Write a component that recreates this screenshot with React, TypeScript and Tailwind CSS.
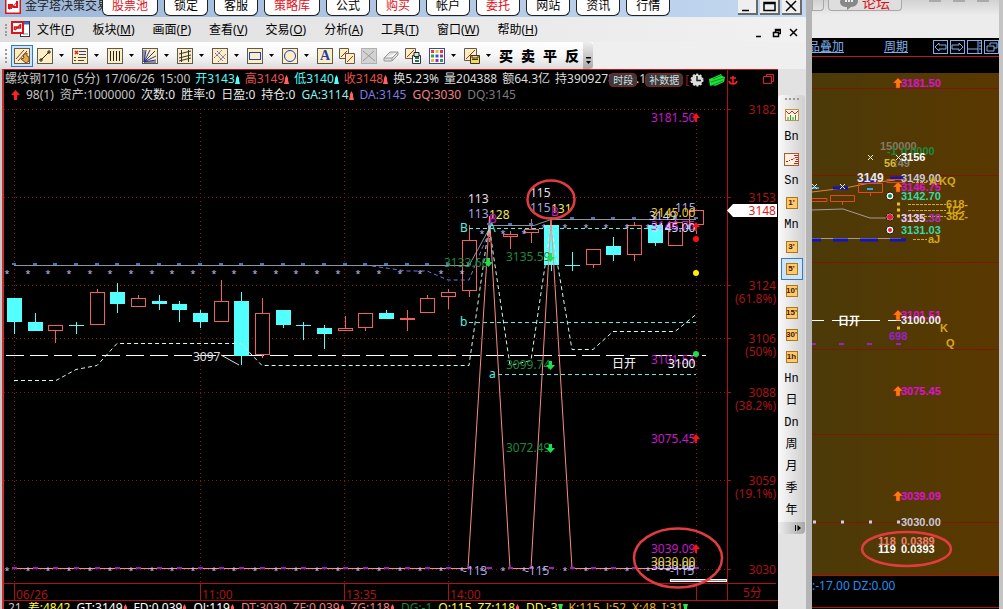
import React from 'react';

const tabs = [
  { label: '股票池', hot: true },
  { label: '锁定' },
  { label: '客服' },
  { label: '策略库', hot: true },
  { label: '公式' },
  { label: '购买', hot: true },
  { label: '帐户' },
  { label: '委托', hot: true },
  { label: '网站' },
  { label: '资讯' },
  { label: '行情' },
];

const menus = [
  ['文件', 'F'],
  ['板块', 'M'],
  ['画面', 'P'],
  ['查看', 'V'],
  ['交易', 'O'],
  ['分析', 'A'],
  ['工具', 'T'],
  ['窗口', 'W'],
  ['帮助', 'H'],
];

// price scale on the right of the chart: [y, price, retracement]
const levels: [number, string, string?][] = [
  [109, '3182'],
  [197, '3153'],
  [285, '3124', '(61.8%)'],
  [338, '3106', '(50%)'],
  [392, '3088', '(38.2%)'],
  [480, '3059', '(19.1%)'],
  [569, '3030'],
];

const timeMarks: [number, string][] = [
  [14, '06/26'],
  [200, '11:00'],
  [344, '13:35'],
  [448, '14:00'],
];

// [up, high, top, bottom, low]
const candles: [number, number, number, number, number][] = [
  [0, 298, 298, 322, 334],
  [0, 313, 322, 331, 331],
  [1, 325, 325, 331, 343],
  [0, 322, 325, 326, 334],
  [1, 289, 292, 325, 325],
  [0, 283, 292, 304, 313],
  [1, 295, 298, 307, 307],
  [0, 295, 301, 304, 310],
  [0, 301, 304, 310, 322],
  [0, 310, 313, 322, 328],
  [1, 280, 301, 322, 322],
  [0, 292, 301, 356, 365],
  [1, 298, 313, 355, 358],
  [0, 310, 310, 325, 328],
  [0, 322, 325, 326, 340],
  [0, 325, 328, 334, 349],
  [1, 316, 328, 331, 331],
  [1, 313, 313, 328, 331],
  [0, 310, 313, 319, 319],
  [1, 310, 318, 320, 331],
  [1, 295, 298, 313, 313],
  [1, 289, 292, 297, 309],
  [1, 225, 240, 291, 297],
  [1, 230, 237, 238, 242],
  [1, 231, 234, 237, 249],
  [1, 219, 229, 233, 243],
  [0, 225, 225, 265, 271],
  [0, 252, 265, 266, 271],
  [1, 249, 249, 265, 268],
  [0, 237, 246, 255, 261],
  [1, 222, 225, 255, 261],
  [0, 225, 225, 243, 246],
  [1, 219, 222, 246, 246],
  [1, 210, 210, 225, 234],
];

const barX = (i: number) => Math.round(14 + (682 / 33) * i);
const upperY = (i: number) => (i < 23 ? 265 : i < 26 ? 225 : 219);

const periods = ['chart', 'Bn', 'ticks', 'Sn', "1'", 'Mn', "3'", "5'", "10'", "15'", "30'", '1h', 'Hn', '日', 'Dn', '周', '月', '季', '年'];
const boxed = ["1'", "3'", "5'", "10'", "15'", "30'", '1h'];

const status: [string, string][] = [
  ['21', 'text-[#c8c8c8]'],
  ['差:4842', 'text-[#ffff30]'],
  ['GT:3149', 'text-white'],
  ['FD:0.039', 'text-white'],
  ['QJ:119', 'text-white'],
  ['DT:3030', 'text-[#f08080]'],
  ['ZF:0.039', 'text-[#f08080]'],
  ['ZG:118', 'text-[#f08080]'],
  ['DG:-1', 'text-[#128a3c]'],
  ['Q:115', 'text-[#ffff30]'],
  ['ZZ:118', 'text-[#ffff30]'],
  ['DD:-3', 'text-[#ffff30]'],
  ['K:115', 'text-[#e8b020]'],
  ['J:52', 'text-[#e8b020]'],
  ['X:48', 'text-[#e8b020]'],
  ['I:31', 'text-[#e8b020]'],
];
const rising = ['GT:3149', 'FD:0.039', 'QJ:119', 'ZF:0.039', 'ZG:118', 'ZZ:118'];
const falling = ['DD:-3', 'I:31'];

const Up = ({ className }: { className: string }) => (
  <svg viewBox="0 0 5 9" className={`inline-block h-[9px] w-[5px] ${className}`} fill="currentColor">
    <path d="M2.5 0 4 3v2l1 4H0l1-4V3z" />
  </svg>
);

const Caret = () => (
  <svg viewBox="0 0 5 3" className="ml-1.5 mr-2 h-[3px] w-[5px] shrink-0">
    <path d="M0 0h5L2.5 3z" fill="#000" />
  </svg>
);

const AppLogo = () => (
  <svg viewBox="0 0 16 16" className="h-4 w-4 shrink-0">
    <rect x="0.5" y="0.5" width="15" height="15" fill="#fff" stroke="#d8141c" strokeWidth="2" />
    <path d="M4 11V7h4M8 7l-4 4M12 3v6H8" fill="none" stroke="#d8141c" strokeWidth="2" />
    <path d="M6 11l6-7" stroke="#d8141c" />
  </svg>
);

const ToolIcon = ({ children, plain }: { children: React.ReactNode; plain?: boolean }) => (
  <svg viewBox="0 0 16 16" className="h-4 w-4 shrink-0" fill="none">
    {!plain && <rect x="0.5" y="0.5" width="15" height="15" fill="#ffeec0" stroke="#5d5a52" />}
    {children}
  </svg>
);

const drawTools = [
  {
    name: '线段',
    icon: <path d="M4 12 12 4M3 11h2v2H3zM11 3h2v2h-2z" stroke="#222" />,
  },
  {
    name: '标注',
    icon: (
      <>
        <path d="M3 3l3 3m0-3L3 6" stroke="#e02020" strokeWidth="1.5" />
        <path d="M7 3.5h7M7 6.500h7" stroke="#2a3fae" />
        <path d="M2 9.500h2M6 9.500h8M2 12.500h2M6 12.500h6" stroke="#444" />
      </>
    ),
  },
  { name: '周期线', icon: <path d="M3.5 3v10M6.5 3v10M9.5 3v10M12.5 3v10" stroke="#222" /> },
  { name: '扇形线', icon: <path d="M2 14 4 2M2 14 8 2M2 14 13 3M2 14l12-6M2 14l12-2M2 2v12h12" stroke="#26348c" /> },
  { name: '通道', icon: <path d="M4.5 2v12M11.5 2v12M2 6l12-3M2 10l12-3M2 13l12-3" stroke="#333" /> },
  { name: '平行线', icon: <path d="M3 5l8 8M5 3l8 8M2 10l8-8M6 14l8-8" stroke="#5a5ab4" strokeDasharray="2 1" /> },
  { name: '矩形', icon: <rect x="2.5" y="4.5" width="11" height="7" stroke="#1b3fd0" /> },
  { name: '圆', icon: <circle cx="8" cy="8" r="5.5" stroke="#1b3fd0" /> },
];

const Titlebar = () => (
  <header className="relative flex h-[17px] items-start justify-between bg-gradient-to-r from-[#9db8da] to-[#c3d8f0] pl-[5px]">
    <div className="flex h-3 items-center gap-1 whitespace-nowrap text-xs text-[#222]">
      <AppLogo />
      <span>金字塔决策交易</span>
    </div>
    <nav className="absolute left-[102px] top-0 flex gap-1.5">
      {tabs.map((tab) => (
        <button
          key={tab.label}
          className={`flex h-4 items-center rounded-b-md border border-t-0 border-[#222] bg-white px-[9px] pb-1 text-xs ${tab.hot ? 'text-[#e01018]' : 'text-black'}`}
        >
          {tab.label}
        </button>
      ))}
    </nav>
    <div className="mr-1 flex gap-0.5">
      {['M4 10.5h7', 'M4 2.5h11v8H4zM4 3.5h11', 'M4 1l10 10M14 1 4 11'].map((d, i) => (
        <button key={d} aria-label={['最小化', '最大化', '关闭'][i]} className="h-[15px] w-5 border-b-2 border-r-2 border-[#6a6a6a] bg-[#efefef]">
          <svg viewBox="0 0 18 13" className="h-[13px] w-[18px]" fill="none" stroke="#000" strokeWidth="1.5">
            <path d={d} />
          </svg>
        </button>
      ))}
    </div>
  </header>
);

const Menubar = () => (
  <div className="flex h-[25px] items-center bg-gradient-to-r from-[#dedede] to-[#f1f1f1] pl-[5px] pr-2">
    <span className="h-3 w-0 border-l-2 border-dotted border-[#999]" />
    <svg viewBox="0 0 20 17" className="ml-1 mr-1.5 h-[17px] w-5 shrink-0" fill="none">
      <rect x="9.5" y="0.5" width="9" height="15" fill="#fff" stroke="#335" />
      <path d="M10 2h8" stroke="#3a6bc0" strokeWidth="3" />
      <path d="M12 13h5" stroke="#888" />
      <rect x="1" y="1" width="11" height="11" fill="#fff" stroke="#d8141c" strokeWidth="2" />
      <path d="M3.5 9V6h3M9.500 3v4h-3M4 9l5-5" stroke="#d8141c" strokeWidth="1.5" />
    </svg>
    <nav className="flex gap-[18px]">
      {menus.map(([label, key]) => (
        <button key={key} className="whitespace-nowrap text-xs text-black">
          {label}(<u>{key}</u>)
        </button>
      ))}
    </nav>
    <div className="ml-auto flex items-center gap-2 pt-1.5">
      {['M1 8.5h5', 'M3.5 4V1.5h5v4H6M1.5 4.5h5v4h-5zM3 2.5h5', 'M1 1l7 7M8 1 1 8'].map((d, i) => (
        <button key={d} aria-label={['最小化窗口', '还原窗口', '关闭窗口'][i]}>
          <svg viewBox="0 0 9 10" className="block h-2.5 w-[9px]" fill="none" stroke="#000" strokeWidth="1.5">
            <path d={d} />
          </svg>
        </button>
      ))}
    </div>
  </div>
);

const Toolbar = () => (
  <div className="flex h-[27px] items-center bg-[#efefef]">
    <div className="flex h-full items-center bg-gradient-to-b from-white via-[#f6f6f6] to-[#dcdcdc] pl-[5px]">
      <span className="mr-1 h-3.5 w-0 border-l-2 border-dotted border-[#999]" />
      <button aria-label="画线" className="mr-1 flex h-[22px] w-[22px] items-center justify-center border border-[#2c7cd0] bg-[#cfe3f8]">
        <ToolIcon>
          <path d="M2 11 10 2M4 13l9-10" stroke="#7a3a20" />
          <path d="M9 7l4-2v3l2 1v4l-3 2-5-4 3-1z" fill="#e8a850" stroke="#704a20" />
        </ToolIcon>
      </button>
      {drawTools.map((tool) => (
        <button key={tool.name} aria-label={tool.name} className="flex items-center">
          <ToolIcon>{tool.icon}</ToolIcon>
          <Caret />
        </button>
      ))}
      <div className="flex items-center gap-1.5">
        <button aria-label="文字" className="flex h-4 w-4 items-center justify-center border border-[#5d5a52] bg-[#ffeec0] font-['Liberation_Serif',serif] text-sm font-bold leading-none text-[#1c3fb0]">
          A
        </button>
        <button aria-label="复制">
          <ToolIcon plain>
            <path d="M.5.5h9v10h-9z" fill="#ffeec0" stroke="#5d5a52" />
            <path d="M2 9 8 3" stroke="#c22" />
            <path d="M6.5 5.5h9v10h-9z" fill="#ffeec0" stroke="#5d5a52" />
            <path d="M8 14l6-6" stroke="#c22" />
          </ToolIcon>
        </button>
        <button aria-label="删除">
          <ToolIcon plain>
            <rect x="0.5" y="0.5" width="15" height="15" fill="#d2d2d2" stroke="#b0b0b0" />
            <path d="M2 3l12 10M2 13 13 3" stroke="#999" />
          </ToolIcon>
        </button>
        <button aria-label="橡皮">
          <ToolIcon plain>
            <path d="M1 10 7 4h8v3l-6 6H1zM1 10h8l6-6M9 10v3" fill="#ddd" stroke="#999" />
          </ToolIcon>
        </button>
        <button aria-label="锁定画线">
          <ToolIcon plain>
            <path d="M.5.5h10v10H.5z" fill="#ffeec0" stroke="#5d5a52" />
            <path d="M2 9 9 2" stroke="#c22" />
            <path d="M7.500 7.500h8v8h-8z" fill="#fff" stroke="#333" />
            <path d="M9 4.500h5v4H9z" fill="#cfe8d8" stroke="#222" />
            <path d="M10 10h4M10 13h4" stroke="#1a7a5a" strokeWidth="2" />
          </ToolIcon>
        </button>
      </div>
      <button aria-label="颜色" className="ml-2 flex items-center">
        <ToolIcon plain>
          <rect x="0.5" y="0.5" width="15" height="15" fill="#fff" stroke="#44469a" />
          <path d="M2 2h3v3H2zM11 2h3v3h-3z" fill="#e83a3a" />
          <path d="M6.500 2h3v3h-3zM2 11h3v3H2z" fill="#e8c020" />
          <path d="M2 6.500h3v3H2zM11 11h3v3h-3z" fill="#2fa04a" />
          <path d="M6.500 6.500h3v3h-3z" fill="#2f55d8" />
          <path d="M11 6.500h3v3h-3zM6.500 11h3v3h-3z" fill="#9a30c0" />
        </ToolIcon>
        <Caret />
      </button>
      <button aria-label="保存" className="flex items-center">
        <ToolIcon plain>
          <path d="M.5.5h12v12H.5z" fill="#ffeec0" stroke="#5d5a52" />
          <path d="M2 11 11 2" stroke="#c22" />
          <path d="M6.500 7.500h9v8h-9z" fill="#ffd94a" stroke="#333" />
          <path d="M8 11.500h6M8 8v2h6V8" stroke="#333" />
        </ToolIcon>
        <Caret />
      </button>
      <div className="mr-1 flex gap-2">
        {['买', '卖', '平', '反'].map((word) => (
          <button key={word} className="text-sm font-black text-black">
            {word}
          </button>
        ))}
      </div>
      <button aria-label="工具栏选项" className="flex h-full w-2.5 items-end justify-center rounded-r-sm bg-gradient-to-b from-[#eee] to-[#a8a8a8] pb-1">
        <svg viewBox="0 0 7 8" className="h-2 w-[7px]">
          <path d="M1 0h5v1.500H1zM1 4h5L3.500 7z" fill="#000" />
        </svg>
      </button>
    </div>
  </div>
);

const ChartHeader = () => (
  <div className="relative flex h-[33px] border-t border-[#c01818]">
    <div className="min-w-0 flex-1 overflow-hidden border-r border-[#b01010] pl-px text-xs leading-4">
      <div className="flex items-center gap-[5px] whitespace-nowrap pt-px text-[#dcdcdc]">
        <span className="text-[#c4c4c4]">螺纹钢1710</span>
        <span className="text-[#c4c4c4]">(5分)</span>
        <span className="text-[#c4c4c4]">17/06/26</span>
        <span className="text-[#c4c4c4]">15:00</span>
        <span className="text-[#54fcfc]">开3143<Up className="text-[#54fcfc]" /></span>
        <span className="text-[#e85050]">高3149<Up className="text-[#ff6060]" /></span>
        <span className="text-[#54fcfc]">低3140<Up className="text-[#54fcfc]" /></span>
        <span className="text-[#e85050]">收3148<Up className="text-[#ff6060]" /></span>
        <span>换5.23%</span>
        <span>量204388</span>
        <span>额64.3亿</span>
        <span>持3909278</span>
        <span className="pl-4">.12</span>
      </div>
      <div className="flex items-center gap-1.5 whitespace-nowrap pl-1.5 text-[#e6e6e6]">
        <svg viewBox="0 0 9 10" className="h-2.5 w-[9px]">
          <path d="M4.500 0 9 5H6v5H3V5H0z" fill="#ff2020" />
        </svg>
        <span className="text-[#c4c4c4]">98(1)</span>
        <span className="text-[#c4c4c4]">资产:1000000</span>
        <span>次数:0</span>
        <span>胜率:0</span>
        <span>日盈:0</span>
        <span>持仓:0</span>
        <span className="text-[#8ff0e8]">GA:3114<Up className="text-[#ff6060]" /></span>
        <span className="text-[#7c7ce0]">DA:3145</span>
        <span className="text-[#f08484]">GQ:3030</span>
        <span className="text-[#7c7c7c]">DQ:3145</span>
      </div>
    </div>
    <div className="flex w-[50px] justify-end pr-1 pt-1">
      <svg viewBox="0 0 11 10" className="h-2.5 w-[11px]" fill="none" stroke="#e02020">
        <path d="M3.500 2.500v-2h7v7h-2M.5 2.500h8v7h-8z" />
      </svg>
    </div>
    <div className="absolute right-10 top-[3px] flex items-center">
      <button className="mr-2 rounded border border-[#8c2020] bg-[#3a3a3e] px-[3px] text-[10px] leading-3 text-[#ddd]">时段</button>
      <button className="mr-0.5 rounded border border-[#8c2020] bg-[#3a3a3e] px-[3px] text-[10px] leading-3 text-[#ddd]">补数据</button>
      <span className="text-xs leading-3 text-[#8c2020]">[4</span>
      <svg viewBox="0 0 14 14" className="-ml-1.5 h-3.5 w-3.5">
        <circle cx="7" cy="7" r="5.500" fill="#ddd" stroke="#ddd" strokeWidth="2" strokeDasharray="2 1.500" />
        <path d="M7 3v4.500h4" fill="none" stroke="#222" strokeWidth="1.500" />
      </svg>
      <svg viewBox="0 0 18 14" className="ml-1 h-3.5 w-[18px]">
        <path d="M1 6l3-1 9-4 1 2 3 1-1 5-9 4-2-1-3 1z" fill="#22e03a" />
        <path d="M5 6l9-4M3 9l13-4M5 12l10-4" stroke="#0a9a20" />
      </svg>
      <svg viewBox="0 0 10 10" className="ml-0.5 h-2.5 w-2.5" fill="none" stroke="#ff2020" strokeWidth="1.500">
        <path d="M5 1v8M2 3h6M1 6c1 4 7 4 8 0" />
      </svg>
    </div>
  </div>
);

const GreenDown = ({ x, y }: { x: number; y: number }) => (
  <path d={`M${x - 1} ${y - 5}h3v4h3l-4.500 5-4.500-5h3z`} fill="#18e050" />
);

const RedUp = ({ x, y }: { x: number; y: number }) => (
  <path d={`M${x - 1} ${y + 5}h2v-4h3l-4-5-4 5h3z`} fill="#ff1010" />
);

const PriceChart = () => (
  <svg viewBox="4 102 774 500" preserveAspectRatio="xMinYMin meet" className="min-h-0 w-full flex-1 text-xs" fill="none">
    <g stroke="#8a1212" strokeDasharray="1 3" shapeRendering="crispEdges">
      {levels.map(([y]) => (
        <path key={y} d={`M4 ${y + 0.5}H727`} />
      ))}
      {[14, 200, 344, 448, 696].map((x) => (
        <path key={x} d={`M${x + 0.5} 109V583`} />
      ))}
    </g>
    <g stroke="#b01010" shapeRendering="crispEdges">
      <path d="M727.500 102V600M4 583.500H776M4 600.500H778M14.500 583v17M200.500 583v17M344.500 583v17M448.500 583v17M696.500 583v17" />
      {levels.map(([y]) => (
        <path key={y} d={`M727 ${y + 0.5}h4`} />
      ))}
    </g>
    <g fill="#a81414">
      {levels.map(([y, price, pct]) => (
        <g key={price} textAnchor="end">
          <text x="776" y={y + 5}>{price}</text>
          {pct && <text x="776" y={y + 18}>{pct}</text>}
        </g>
      ))}
      {timeMarks.map(([x, label]) => (
        <text key={label} x={x + 2} y="599">{label}</text>
      ))}
      <text x="743" y="597">5分</text>
    </g>
    <path d="M727 210.500l6-6.500h44v13h-44z" fill="#fff" />
    <text x="776" y="215" textAnchor="end" fill="#e01818">3148</text>

    {/* day open */}
    <path d="M6 355.500H706" stroke="#fff" strokeDasharray="18 6" />

    <g shapeRendering="crispEdges">
      {candles.map(([up, high, top, bottom, low], i) => {
        const x = barX(i);
        return up ? (
          <g key={i} stroke="#f06060">
            <path d={`M${x + 0.5} ${high}V${top}M${x + 0.5} ${bottom}V${low}`} />
            <rect x={x - 6.5} y={top + 0.5} width="14" height={Math.max(bottom - top - 1, 0)} fill="#000" />
          </g>
        ) : (
          <g key={i}>
            <path d={`M${x + 0.5} ${high}V${low}`} stroke="#54ffff" />
            <rect x={x - 7} y={top} width="15" height={bottom - top} fill="#54ffff" />
          </g>
        );
      })}
    </g>

    <path d="M14 265.500H469L491 225.500H534L551 219.500H696" stroke="#8e949e" />
    <path d="M365 265l42 6h20l21 9h21l20-48" stroke="#7474d8" strokeDasharray="4 3" />
    <g stroke="#c8fff0" strokeDasharray="4 3">
      <path d="M14 380.500h42l20-11 21-4 20-22h124l21 22h207l20-140 21 140 21-5 20-135 21 124h21l20-18h62l21-17" />
      <path d="M469 228.500H696M469 322.500H696M498 374.500H696" stroke="#54f0e8" />
    </g>
    <path d="M14 568.500H468L489.500 216 510 568.500H531L551 219 572 568.500H696" stroke="#f88c84" />
    {candles.map((_, i) => (
      <g key={i} className="text-[9px]">
        <rect x={barX(i) - 2} y={upperY(i) - 2} width="4" height="2" fill="#3f78c0" />
        <rect x={barX(i) - 2} y="567" width="5" height="2" fill="#9a20c8" />
        <text x={barX(i) - 7} y={upperY(i) + 12} textAnchor="middle" fill="#c8c0f0">*</text>
        <text x={barX(i) - 7} y="574" textAnchor="middle" fill="#c8c0f0">*</text>
      </g>
    ))}

    <path d="M221 355l18 10" stroke="#ddd" />
    <text x="193" y="361" fill="#dcdcdc">3097</text>

    <g fill="#54f0e8">
      <text x="460" y="232">B</text>
      <text x="460" y="326">b</text>
      <text x="489" y="378">a</text>
      <text x="488" y="232">A</text>
    </g>
    <g fill="#1c8a3c">
      <text x="444" y="267">3133.60</text>
      <text x="506" y="261">3135.59</text>
      <text x="506" y="369">3099.74</text>
      <text x="506" y="452">3072.49</text>
    </g>
    <g fill="#e0e0e8">
      <text x="468" y="203">113</text>
      <text x="530" y="197">115</text>
      <g fill="#a8a8e0">
        <text x="468" y="218">113</text>
        <text x="530" y="212">115</text>
        <text x="675" y="212">115</text>
        <text x="463" y="575">-113</text>
        <text x="525" y="575">-115</text>
        <text x="670" y="575">-115</text>
      </g>
    </g>
    <g fill="#f0e850">
      <text x="489" y="219">128</text>
      <text x="551" y="213">131</text>
    </g>
    <g fill="#c818c8">
      <text x="489" y="223">B</text>
      <text x="551" y="216">B</text>
      <text x="651" y="122">3181.50</text>
      <text x="651" y="230">3146.75</text>
      <text x="651" y="364">3101.51</text>
      <text x="651" y="443">3075.45</text>
      <text x="651" y="553">3039.09</text>
    </g>
    <g fill="#d8d0f8">
      <text x="649" y="220">3149</text>
      <text x="651" y="232">3145.00</text>
      <text x="651" y="570">3030.00</text>
    </g>
    <g fill="#e8c820">
      <text x="651" y="217">3145.00</text>
      <text x="651" y="566">3030.00</text>
    </g>
    <text x="612" y="368" fill="#fff">日开</text>
    <text x="668" y="368" fill="#fff">3100</text>

    <GreenDown x={488} y={263} />
    <GreenDown x={550} y={258} />
    <GreenDown x={550} y={366} />
    <GreenDown x={550} y={449} />
    <RedUp x={696} y={117} />
    <RedUp x={696} y={226} />
    <RedUp x={696} y={438} />
    <RedUp x={696} y={548} />
    <circle cx="696" cy="239" r="3" fill="#ff1010" />
    <circle cx="696" cy="273" r="3" fill="#fff000" />
    <circle cx="696" cy="354" r="3" fill="#18e050" />
    <rect x="670.500" y="579.500" width="56" height="2" fill="#889" stroke="#fff" />

    <g stroke="#e23c40" strokeWidth="2.500">
      <ellipse cx="551" cy="199.500" rx="23.500" ry="19" />
      <ellipse cx="678" cy="558" rx="44" ry="29.500" />
    </g>
  </svg>
);

const PeriodBar = () => (
  <aside className="flex w-7 flex-col bg-[#e2e2e2] pt-[26px]">
    <div className="flex w-[27px] flex-col items-center rounded-t bg-gradient-to-r from-[#fafafa] to-[#cfcfcf] pt-[3px]">
      <span className="mb-1 w-3.5 border-t-2 border-dotted border-[#999]" />
      {periods.map((p) => (
        <button
          key={p}
          aria-label={p}
          className={`flex h-[22px] w-[22px] items-center justify-center ${p === "5'" ? 'border border-[#2c7cd0] bg-[#cfe3f8]' : ''}`}
        >
          {p === 'chart' && (
            <svg viewBox="0 0 14 12" className="h-3 w-3.5" fill="none">
              <rect x="0.500" y="0.500" width="13" height="11" fill="#fff4dc" stroke="#c09050" />
              <path d="M1 2l3 3 3-3 3 3 3-3" stroke="#d02020" />
              <path d="M3 11V8M5.500 11V6M8 11V8M10.500 11V6" stroke="#20a030" />
            </svg>
          )}
          {p === 'ticks' && (
            <svg viewBox="0 0 15 13" className="h-[13px] w-[15px]" fill="none">
              <rect x="0.500" y="0.500" width="14" height="12" fill="#fff0e0" stroke="#a85a30" />
              <path d="M2 8.500h2M5 7.500h1M7 6.500h2M9.500 5.500h1M10 2.500h4M11 4.500h3M12 6.500h2M11 8.500h3M10 10.500h4" stroke="#c02020" />
            </svg>
          )}
          {boxed.includes(p) && (
            <span className="flex h-3 w-3 items-center justify-center border border-[#a87820] bg-[#ffc868] font-['Liberation_Sans',sans-serif] text-[8px] font-bold leading-none text-[#401808]">
              {p}
            </span>
          )}
          {p.length < 3 && !boxed.includes(p) && (
            <span className="font-['Liberation_Mono','Noto_Sans_CJK_SC',monospace] text-xs text-black">{p}</span>
          )}
        </button>
      ))}
    </div>
    <button aria-label="更多周期" className="flex h-3 w-[27px] items-center justify-end rounded-b bg-gradient-to-r from-[#eee] to-[#a8a8a8] pr-1">
      <svg viewBox="0 0 6 6" className="h-1.5 w-1.5">
        <path d="M0 0h1v6H0zM2.500 0 6 3 2.500 6z" fill="#000" />
      </svg>
    </button>
  </aside>
);

const OrangeUp = ({ y }: { y: number }) => (
  <path d={`M898 ${y - 5}l5 5h-3v5h-4v-5h-3z`} fill="#ff7a10" stroke="#c03000" strokeWidth="0.500" />
);

const Overview = () => (
  <svg
    viewBox="812 73 187 502"
    preserveAspectRatio="xMinYMin meet"
    className="min-h-0 w-full flex-1 bg-gradient-to-r from-[#4b3a08] to-[#5a3800] font-['Liberation_Sans','Noto_Sans_CJK_SC',sans-serif] text-[11px] font-bold"
    fill="none"
  >
    <path d="M812 88.500h187M812 175.500h187M812 262.500h187M812 349.500h187M812 434.500h187M812 522.500h187" stroke="#761c06" />
    <path d="M812 210l31-1 27 9h20M812 238.500h89" stroke="#a8989c" />
    <path d="M812 192l33-4 25-5 25-3" stroke="#e08048" />
    <path d="M812 240h9M833 240h15M860 240h18M890 240h16M833 188h15M861 181h16M890 178h15" stroke="#1414b8" strokeWidth="3" />
    <path d="M812 198.500h15v3h-15M830.500 195.500h24v6h-24zM858.500 183.500h24v9h-24zM886.500 179.500h18v3h-18M842.500 201v4M870.500 192v4" stroke="#e84820" />
    <path d="M867 189h6M812 188h7" stroke="#30a8f0" strokeWidth="2" />
    <path d="M812 320.500h12M832 320.500h48M888 320.500h13" stroke="#fff" />
    <path d="M812 344h4M839 344h5M867 344h5M896 344h5" stroke="#9a20d0" strokeWidth="2" />
    <path d="M813 522h3M841 522h3M869 522h3M897 522h3" stroke="#d8c8e8" strokeWidth="3" />
    <path d="M897 204h3M897 210h3M897 216h3M897 328h3" stroke="#f0c020" strokeWidth="3" />
    <path d="M908 204.500h38M908 210.500h38M908 216.500h38M913 239.500h14M912 182.500h16" stroke="#d8a818" strokeDasharray="3 1" />
    <path d="M868 155l5 5m0-5l-5 5M896 155l5 5m0-5l-5 5M812 184l5 5m0-5l-5 5M840 184l5 5m0-5l-5 5" stroke="#f0f0d8" />

    <text x="880" y="150" fill="#857a68">150000</text>
    <text x="887" y="155" fill="#1c8a3c">-1</text>
    <text x="901" y="155" fill="#1c8a3c">0.0000</text>
    <text x="884" y="167" fill="#d8b838">56</text>
    <text x="894" y="167" fill="#8c8478">:49</text>
    <text x="901" y="161" fill="#fff">3156</text>
    <text x="857" y="182" fill="#e8e8f0" className="text-xs">3149</text>
    <g fill="#c8c8d8">
      <text x="901" y="182">3149.00</text>
      <text x="901" y="526">3030.00</text>
    </g>
    <g fill="#e010d0">
      <text x="901" y="87">3181.50</text>
      <text x="901" y="191">3146.75</text>
      <text x="901" y="319">3101.51</text>
      <text x="901" y="395">3075.45</text>
      <text x="901" y="500">3039.09</text>
    </g>
    <g fill="#38d8a8">
      <text x="901" y="200">3142.70</text>
      <text x="901" y="234">3131.03</text>
    </g>
    <text x="901" y="222" fill="#b030c0">3135.38</text>
    <text x="901" y="222" fill="#e0d8e8">3135</text>
    <g fill="#d8a818">
      <text x="929" y="185">A</text>
      <text x="939" y="185">KQ</text>
      <text x="946" y="208">618-</text>
      <text x="946" y="214">1/2-</text>
      <text x="946" y="220">382-</text>
      <text x="928" y="243">aJ</text>
      <text x="940" y="332">K</text>
      <text x="946" y="347">Q</text>
    </g>
    <text x="838" y="325" fill="#fff">日开</text>
    <text x="901" y="324" fill="#f0f0f0">3100.00</text>
    <text x="889" y="340" fill="#9a20d0">698</text>
    <g fill="#fff" stroke="#221a10">
      <circle cx="890" cy="196" r="4" />
      <circle cx="890" cy="217" r="4" />
      <circle cx="890" cy="230" r="4" />
    </g>
    <circle cx="890" cy="196" r="2" fill="#108040" />
    <circle cx="890" cy="217" r="3" fill="#e02030" />
    <circle cx="890" cy="230" r="2" fill="#e02030" />
    <OrangeUp y={83} />
    <OrangeUp y={187} />
    <OrangeUp y={315} />
    <OrangeUp y={391} />
    <OrangeUp y={496} />
    <text x="878" y="545" fill="#f08070">118</text>
    <text x="901" y="545" fill="#f08070">0.0389</text>
    <text x="878" y="553" fill="#fff">119</text>
    <text x="901" y="553" fill="#fff">0.0393</text>
    <ellipse cx="906.500" cy="549" rx="44.500" ry="17" stroke="#e23c40" strokeWidth="2.500" />
  </svg>
);

const barIcons = [
  { name: '后退', d: 'M2 7l4-4v2h7v4H6v2z' },
  { name: '前进', d: 'M13 7 9 3v2H2v4h7v2z' },
  { name: '分栏', d: 'M1 9h10M11 1v12M12 3h2M12 6h2M12 9h2' },
  { name: '还原', d: 'M6 5V3h7v5h-3M3 6h7v5H3z' },
];

const SecondWindow = () => (
  <section className="flex w-[191px] shrink-0 flex-col border-r-4 border-[#c4c4c4] bg-black">
    <div className="flex h-[38px] items-start overflow-hidden bg-gradient-to-b from-[#d2d2d2] to-[#ececec] to-40%">
      <div className="h-[11px] w-3 rounded-br border border-t-0 border-[#a8a8a8]" />
      <button className="ml-1 flex h-[11px] w-[74px] items-end justify-center gap-1 rounded-b border border-t-0 border-[#a8a8a8] bg-[#dedede] text-sm leading-none text-[#e01018]">
        <svg viewBox="0 0 18 14" className="h-3.5 w-[18px]">
          <path d="M9 0c5 0 9 2 9 5s-3 6-7 6l-4 3V11C3 11 0 9 0 6s4-6 9-6z" fill="#888" />
          <path d="M5 5h2M8 5h2M11 5h2" stroke="#eee" strokeWidth="2" />
        </svg>
        论坛
      </button>
      <div className="flex flex-1 justify-end gap-3 pr-2.5">
        <span className="h-0.5 w-3 bg-[#aaa]" />
        <span className="h-0.5 w-3 bg-[#aaa]" />
        <span className="h-0.5 w-3 bg-[#aaa]" />
      </div>
    </div>
    <div className="flex h-[19px] items-center overflow-hidden border-b border-[#c01818] text-xs text-[#7fb0ea]">
      <a href="#overlay" className="-ml-1 whitespace-nowrap underline">品叠加</a>
      <a href="#period" className="ml-10 whitespace-nowrap underline">周期</a>
      <div className="ml-auto flex gap-0.5">
        {barIcons.map((icon) => (
          <button key={icon.name} aria-label={icon.name} className="shrink-0">
            <svg viewBox="0 0 15 14" className="block h-3.5 w-[15px]" fill="none" stroke="currentColor">
              <rect x="0.500" y="0.500" width="14" height="13" />
              <path d={icon.d} />
            </svg>
          </button>
        ))}
      </div>
    </div>
    <div className="h-4 shrink-0" />
    <Overview />
    <div className="h-[33px] shrink-0 border-y border-[#b01010] text-xs leading-5 text-[#2090f0]">:-17.00 DZ:0.00</div>
    <div className="h-px shrink-0" />
  </section>
);

const App: React.FC = () => {
  return (
    <div className="flex h-screen overflow-hidden bg-[#e2e2e2] font-['Noto_Sans','Noto_Sans_CJK_SC',sans-serif]">
      <main className="flex min-w-0 flex-1 flex-col border-r-6 border-[#b4b4b4]">
        <Titlebar />
        <Menubar />
        <Toolbar />
        <div className="flex min-h-0 flex-1">
          <div className="flex min-w-0 flex-1 border-l-2 border-[#c8c8c8]">
            <div className="flex min-w-0 flex-1 flex-col border-l-2 border-[#c83030] bg-black">
              <ChartHeader />
              <PriceChart />
              <div className="flex h-[7px] shrink-0 items-start gap-1.5 overflow-hidden whitespace-nowrap pl-1 text-xs leading-3">
                {status.map(([label, color]) => (
                  <span key={label} className={color}>
                    {label}
                    {rising.includes(label) && <Up className="text-[#ff6060]" />}
                    {falling.includes(label) && <Up className="rotate-180 text-[#30e050]" />}
                  </span>
                ))}
              </div>
            </div>
          </div>
          <PeriodBar />
        </div>
      </main>
      <SecondWindow />
    </div>
  );
};

export default App;
